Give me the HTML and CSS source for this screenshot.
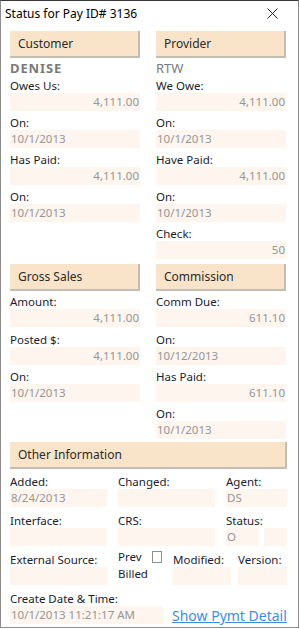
FILE: index.html
```html
<!DOCTYPE html>
<html lang="en">
<head>
  <meta charset="UTF-8" />
  <title>Status for Pay ID# 3136</title>
  <link rel="stylesheet" href="styles.css">
</head>
<body>
  <div class="window">
    <div class="title-bar">
      <span class="title">Status for Pay ID# 3136</span>
      <svg class="close" width="11" height="11" viewBox="0 0 11 11">
        <path d="M0.5 0.5 L10.5 10.5 M10.5 0.5 L0.5 10.5" stroke="#222" stroke-width="1" fill="none"/>
      </svg>
    </div>

    <div class="content">
      <div class="cols">
        <div class="col">
          <div class="section-head">Customer</div>
          <div class="party bold">DENISE</div>
          <div class="field"><div class="lbl">Owes Us:</div><div class="box num">4,111.00</div></div>
          <div class="field"><div class="lbl">On:</div><div class="box">10/1/2013</div></div>
          <div class="field"><div class="lbl">Has Paid:</div><div class="box num">4,111.00</div></div>
          <div class="field"><div class="lbl">On:</div><div class="box">10/1/2013</div></div>
        </div>
        <div class="col">
          <div class="section-head">Provider</div>
          <div class="party">RTW</div>
          <div class="field"><div class="lbl">We Owe:</div><div class="box num">4,111.00</div></div>
          <div class="field"><div class="lbl">On:</div><div class="box">10/1/2013</div></div>
          <div class="field"><div class="lbl">Have Paid:</div><div class="box num">4,111.00</div></div>
          <div class="field"><div class="lbl">On:</div><div class="box">10/1/2013</div></div>
          <div class="field"><div class="lbl">Check:</div><div class="box num">50</div></div>
        </div>
      </div>

      <div class="cols">
        <div class="col">
          <div class="section-head">Gross Sales</div>
          <div class="field first"><div class="lbl">Amount:</div><div class="box num">4,111.00</div></div>
          <div class="field spaced"><div class="lbl">Posted $:</div><div class="box num">4,111.00</div></div>
          <div class="field"><div class="lbl">On:</div><div class="box">10/1/2013</div></div>
        </div>
        <div class="col">
          <div class="section-head">Commission</div>
          <div class="field first"><div class="lbl">Comm Due:</div><div class="box num">611.10</div></div>
          <div class="field spaced"><div class="lbl">On:</div><div class="box">10/12/2013</div></div>
          <div class="field"><div class="lbl">Has Paid:</div><div class="box num">611.10</div></div>
          <div class="field"><div class="lbl">On:</div><div class="box">10/1/2013</div></div>
        </div>
      </div>

      <div class="section-head wide">Other Information</div>
      <div class="other">
        <div class="row">
          <div class="field w97"><div class="lbl">Added:</div><div class="box">8/24/2013</div></div>
          <div class="field w97"><div class="lbl">Changed:</div><div class="box"></div></div>
          <div class="field grow"><div class="lbl">Agent:</div><div class="box">DS</div></div>
        </div>
        <div class="row">
          <div class="field w97"><div class="lbl">Interface:</div><div class="box"></div></div>
          <div class="field w97"><div class="lbl">CRS:</div><div class="box"></div></div>
          <div class="field grow">
            <div class="lbl">Status:</div>
            <div class="pair"><div class="box w33">O</div><div class="box grow"></div></div>
          </div>
        </div>
        <div class="row">
          <div class="field w97"><div class="lbl">External Source:</div><div class="box"></div></div>
          <div class="prev">
            <div class="prev-text">Prev<br>Billed</div>
            <span class="check"></span>
          </div>
          <div class="field w58"><div class="lbl">Modified:</div><div class="box"></div></div>
          <div class="field grow tight"><div class="lbl">Version:</div><div class="box"></div></div>
        </div>
        <div class="row">
          <div class="field w152"><div class="lbl">Create Date &amp; Time:</div><div class="box">10/1/2013 11:21:17 AM</div></div>
          <a class="detail-link" href="#">Show Pymt Detail</a>
        </div>
      </div>
    </div>
  </div>
</body>
</html>
```

FILE: styles.css
```css
* {
  margin: 0;
  padding: 0;
  box-sizing: border-box;
}

body {
  font-family: 'Noto Sans', 'Open Sans', sans-serif;
  font-size: 11.5px;
  background: #ffffff;
  color: #1c1c2c;
  width: 300px;
  height: 629px;
  overflow: hidden;
}

.window {
  width: 299px;
  height: 628px;
  border: 1px solid #8c8c8c;
  border-top: 1px solid #3a3a3a;
  background: #ffffff;
}

.title-bar {
  height: 24px;
  display: flex;
  align-items: center;
  justify-content: space-between;
  padding: 0 20px 0 4px;
}

.title {
  font-size: 12px;
  color: #000;
}

.content {
  padding: 6px 11px 0 9px;
}

.cols {
  display: flex;
  gap: 16px;
}

.col {
  width: 130px;
  display: flex;
  flex-direction: column;
}

.section-head {
  height: 27px;
  background: #f9e3c9;
  border-right: 2px solid #c4bdb4;
  border-bottom: 2px solid #c4bdb4;
  padding-left: 8px;
  display: flex;
  align-items: center;
  font-size: 12px;
  color: #2b2b2b;
}

.section-head.wide {
  margin-top: -2px;
}

.party {
  height: 16px;
  margin: 2px 0 3px;
  font-size: 13px;
  line-height: 16px;
  color: #7a7a7a;
}

.party.bold {
  font-weight: bold;
  letter-spacing: 0.9px;
}

.field {
  display: flex;
  flex-direction: column;
  margin-bottom: 5px;
}

.field.first {
  margin-top: 4px;
}

.field.spaced {
  margin-top: 1px;
}

.lbl {
  height: 14px;
  line-height: 14px;
  white-space: nowrap;
}

.box {
  height: 18px;
  background: #fdf5ee;
  color: #969696;
  line-height: 18px;
  padding: 0 1px;
  white-space: nowrap;
  overflow: hidden;
}

.box.num {
  text-align: right;
}

.other {
  margin-top: 6px;
  display: flex;
  flex-direction: column;
}

.other .field {
  margin-bottom: 7px;
}

.row {
  display: flex;
  gap: 11px;
}

.w97 { width: 97px; }
.w58 { width: 58px; }
.w152 { width: 153px; }
.w33 { width: 33px; }
.grow { flex: 1; }

.tight {
  margin-left: -4px;
}

.pair {
  display: flex;
  gap: 5px;
}

.prev {
  width: 44px;
  display: flex;
  gap: 4px;
}

.prev-text {
  line-height: 17px;
  margin-top: -5px;
}

.check {
  width: 12px;
  height: 12px;
  border: 1px solid #8e8e8e;
  background: #fff;
  margin-top: -2px;
}

.detail-link {
  align-self: flex-end;
  margin-bottom: 6px;
  margin-left: -2px;
  font-size: 14px;
  color: #3b8ee2;
  text-decoration: underline;
  white-space: nowrap;
}
```
